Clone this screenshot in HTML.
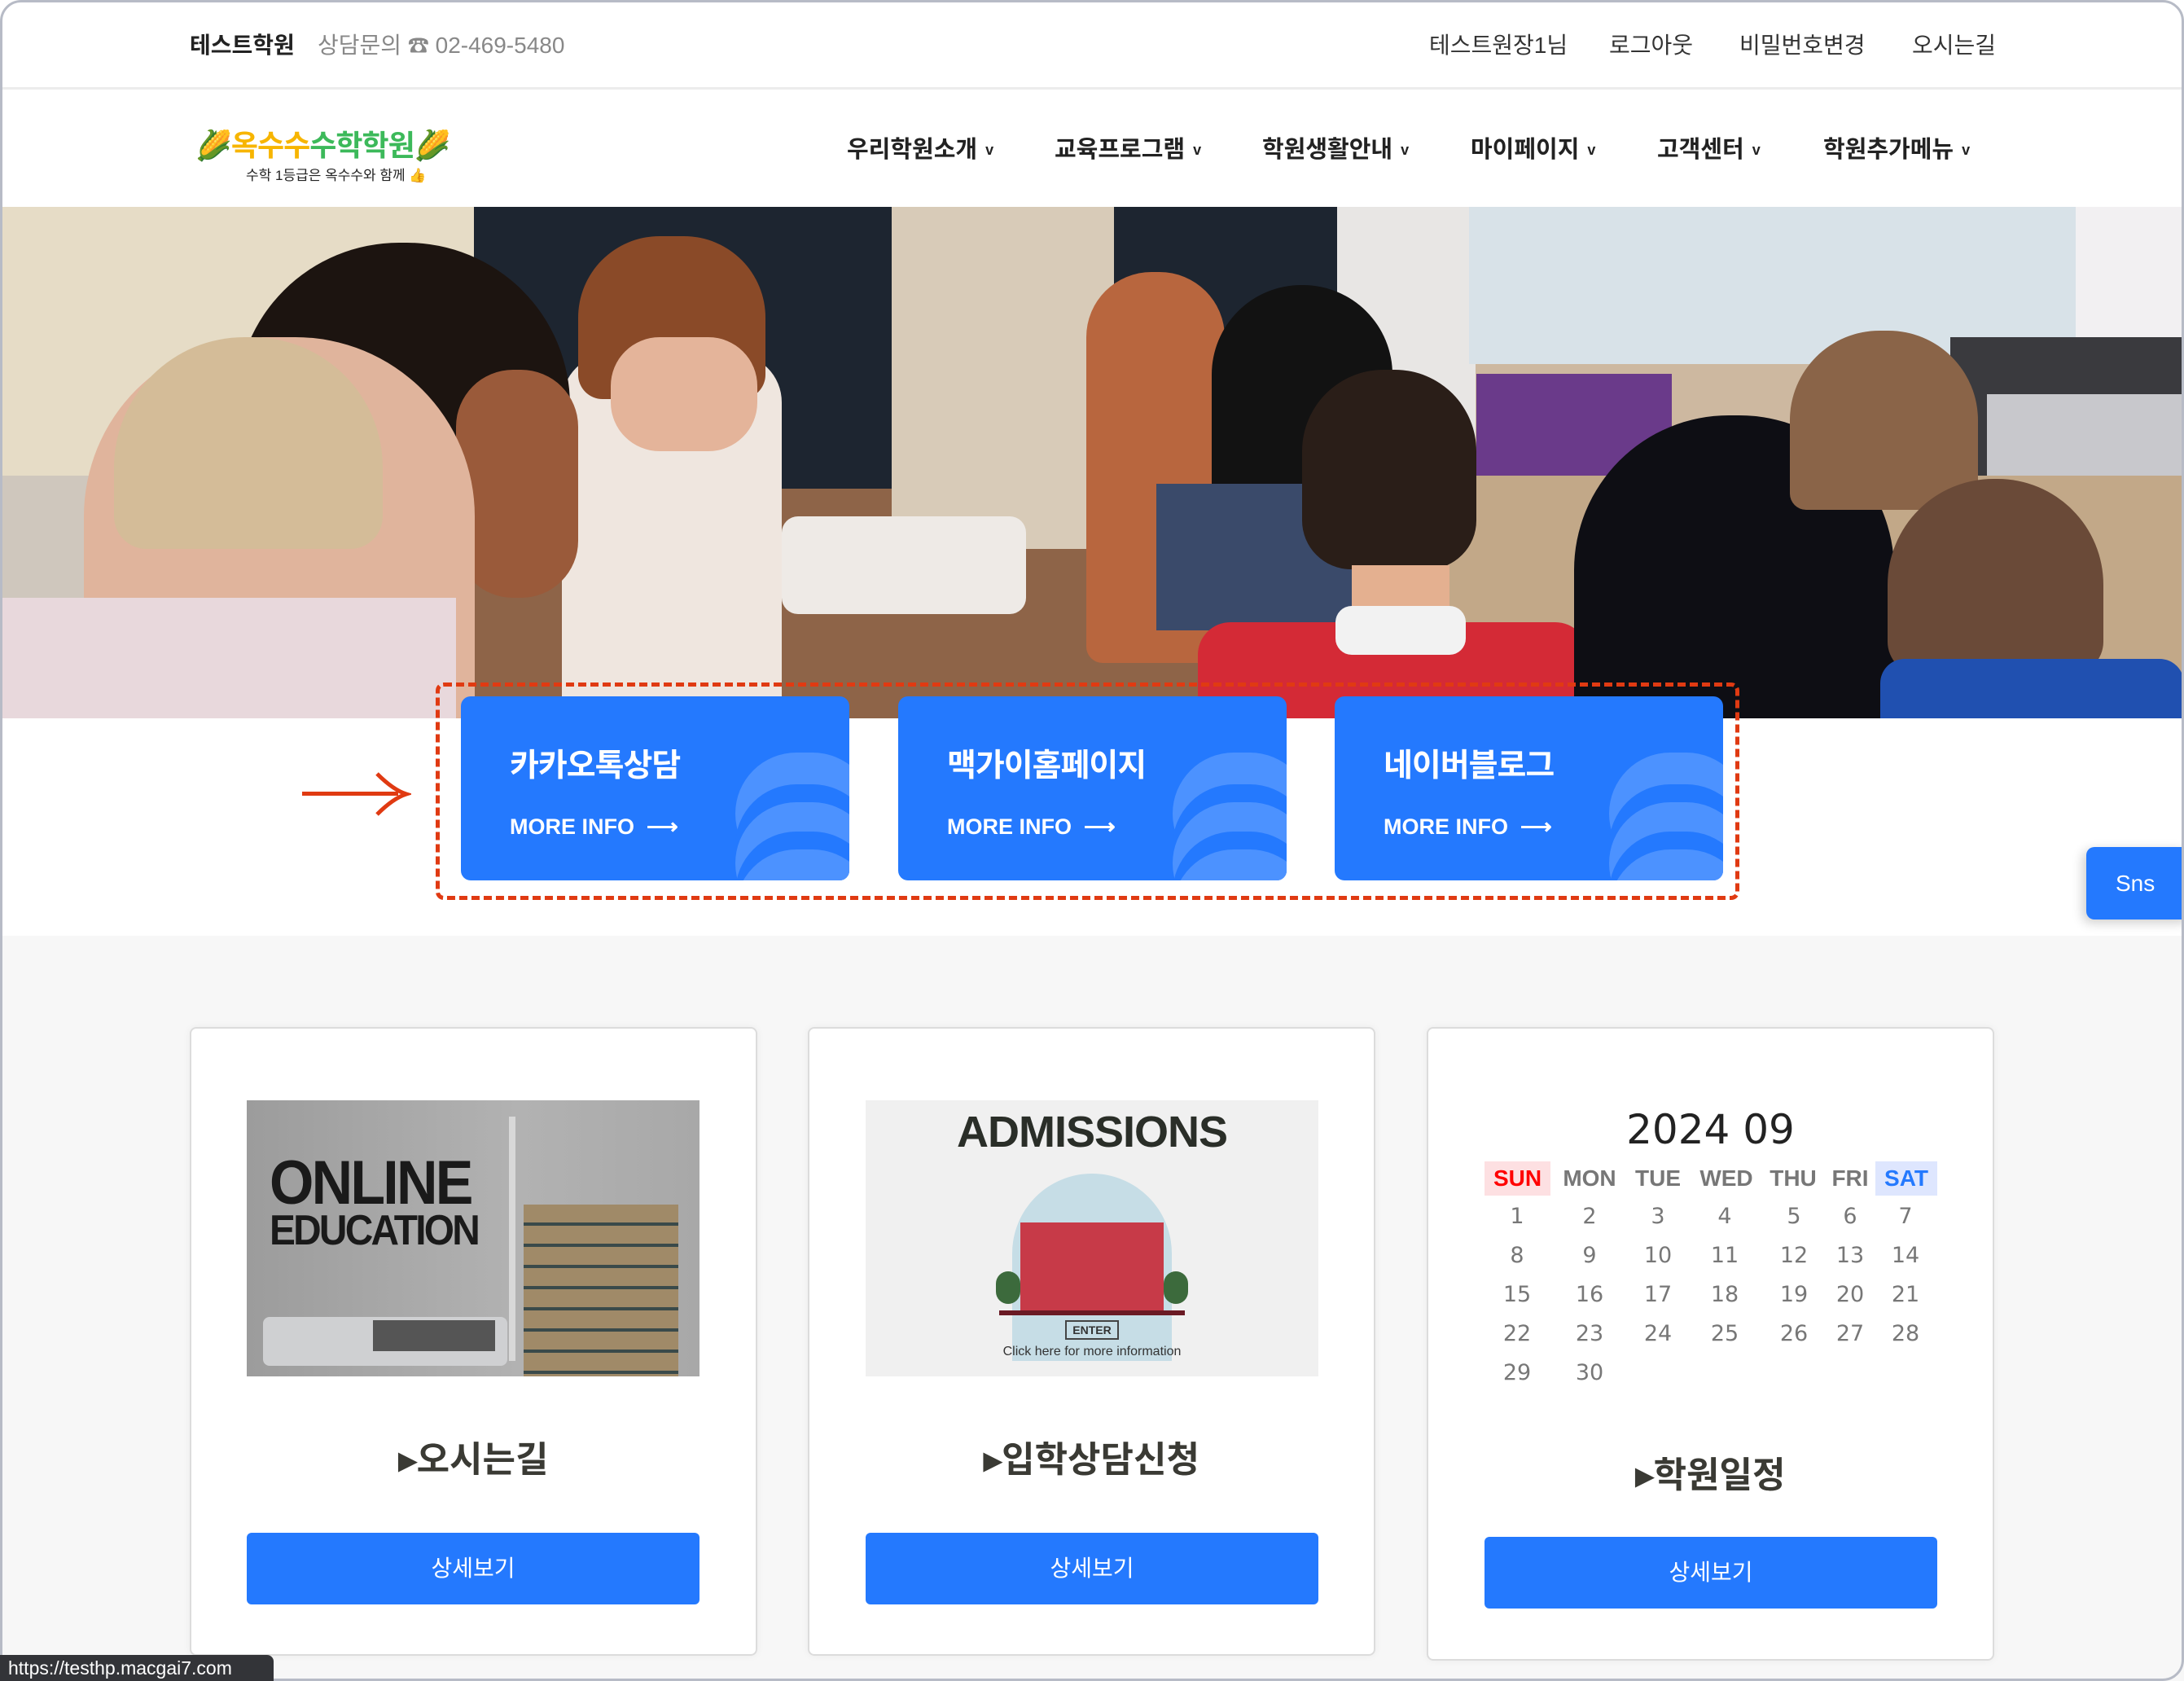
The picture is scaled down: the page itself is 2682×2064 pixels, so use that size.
<!DOCTYPE html>
<html><head><meta charset="utf-8"><style>
*{margin:0;padding:0;box-sizing:border-box}
body{width:2682px;height:2064px;overflow:hidden;background:#fff;font-family:"Liberation Sans","Noto Sans CJK KR",sans-serif;position:relative}
.a{position:absolute}
.frame{position:absolute;left:0;top:0;width:2682px;height:2064px;border:3px solid #b7bbc6;border-radius:26px;pointer-events:none;z-index:50}
.top{font-size:28px;color:#333;top:34px}
.nav{font-size:29px;font-weight:bold;color:#222;top:160px}
.nav span{font-size:18px;margin-left:10px;vertical-align:3px}
.hero div{position:absolute}
.card{background:#2479fe;border-radius:12px;overflow:hidden;top:855px;width:477px;height:226px}
.card .t{position:absolute;left:60px;top:54px;color:#fff;font-size:39px;font-weight:bold;letter-spacing:-1px}
.card .m{position:absolute;left:60px;top:145px;color:#fff;font-size:27px;font-weight:bold}
.coin{position:absolute;left:337px;width:170px;height:150px;border-radius:85px;background:#4c92ff}
.card .c2,.card .c3{box-shadow:0 -22px 0 #2479fe}
.bc{background:#fff;border:2px solid #dcdcdc;border-radius:8px;box-shadow:0 0 10px rgba(0,0,0,.05)}
.btn{background:#2479fe;border-radius:6px;color:#fff;font-size:28px;text-align:center;line-height:88px;width:556px;height:88px}
.ttl{font-size:44px;font-weight:bold;color:#3a3a34;text-align:center}
.cal{font-family:"DejaVu Sans","Liberation Sans",sans-serif;color:#777;font-size:27px;text-align:center;width:90px;margin-left:-45px}
.wd{font-weight:bold;font-size:28px;color:#777;text-align:center;top:1426px;height:42px;line-height:42px}
</style></head><body>
<div class="frame"></div>

<div class="a top" style="left:233px;font-weight:bold;color:#222">테스트학원</div>
<div class="a top" style="left:390px;color:#888">상담문의 <span style="font-size:26px">&#9742;</span> 02-469-5480</div>
<div class="a top" style="left:1755px">테스트원장1님</div>
<div class="a top" style="left:1976px">로그아웃</div>
<div class="a top" style="left:2136px">비밀번호변경</div>
<div class="a top" style="left:2348px">오시는길</div>
<div class="a" style="left:0;top:107px;width:2682px;height:3px;background:#ececec"></div>

<div class="a" style="left:240px;top:150px;font-size:36px;font-weight:bold;letter-spacing:-1px"><span style="color:#6cbd3a">🌽</span><span style="color:#f7b500">옥수수</span><span style="color:#3cb95a">수학학원</span><span style="color:#6cbd3a">🌽</span></div>
<div class="a" style="left:302px;top:201px;font-size:17px;color:#222">수학 1등급은 옥수수와 함께 👍</div>
<div class="a nav" style="left:1040px">우리학원소개<span>v</span></div>
<div class="a nav" style="left:1295px">교육프로그램<span>v</span></div>
<div class="a nav" style="left:1550px">학원생활안내<span>v</span></div>
<div class="a nav" style="left:1806px">마이페이지<span>v</span></div>
<div class="a nav" style="left:2035px">고객센터<span>v</span></div>
<div class="a nav" style="left:2239px">학원추가메뉴<span>v</span></div>

<div class="a hero" style="left:0;top:254px;width:2682px;height:628px;overflow:hidden;background:#cdb8a0">
 <div style="left:0;top:0;width:582px;height:330px;background:#e6dcc6"></div>
 <div style="left:0;top:330px;width:582px;height:300px;background:#cfc7bd"></div>
 <div style="left:582px;top:0;width:1060px;height:346px;background:#1d2530"></div>
 <div style="left:1642px;top:0;width:170px;height:330px;background:#e8e6e4"></div>
 <div style="left:1804px;top:0;width:745px;height:193px;background:#d8e2e8"></div>
 <div style="left:2549px;top:0;width:133px;height:170px;background:#f2f0f2"></div>
 <div style="left:1813px;top:205px;width:240px;height:150px;background:#6a3a8a"></div>
 <div style="left:2395px;top:160px;width:287px;height:195px;background:#3a3a3e"></div>
 <div style="left:2440px;top:230px;width:242px;height:120px;background:#c8c8cc"></div>
 <div style="left:1642px;top:330px;width:1040px;height:300px;background:#c2a888"></div>
 <div style="left:582px;top:346px;width:900px;height:290px;background:#8e6448"></div>
 <div style="left:1095px;top:0;width:273px;height:420px;background:#d8cbb8"></div>
 <div style="left:960px;top:380px;width:300px;height:120px;background:#eeeae6;border-radius:20px"></div>
 <div style="left:690px;top:180px;width:270px;height:450px;background:#efe6df;border-radius:60px 60px 0 0"></div>
 <div style="left:710px;top:36px;width:230px;height:200px;background:#8a4a28;border-radius:100px 100px 30px 30px"></div>
 <div style="left:750px;top:160px;width:180px;height:140px;background:#e4b49a;border-radius:60px"></div>
 <div style="left:290px;top:44px;width:410px;height:400px;background:#1c1410;border-radius:200px 200px 60px 60px"></div>
 <div style="left:560px;top:200px;width:150px;height:280px;background:#9a5a3a;border-radius:70px"></div>
 <div style="left:103px;top:160px;width:480px;height:470px;background:#e0b49c;border-radius:220px 220px 0 0"></div>
 <div style="left:140px;top:160px;width:330px;height:260px;background:#d4bc98;border-radius:160px 160px 40px 40px"></div>
 <div style="left:0;top:480px;width:560px;height:150px;background:#e8d8dc"></div>
 <div style="left:1334px;top:80px;width:170px;height:480px;background:#b8663e;border-radius:80px 80px 20px 20px"></div>
 <div style="left:1488px;top:96px;width:222px;height:270px;background:#121212;border-radius:110px 110px 20px 20px"></div>
 <div style="left:1420px;top:340px;width:330px;height:180px;background:#3a4a6a"></div>
 <div style="left:1599px;top:200px;width:214px;height:245px;background:#2a1e18;border-radius:100px 100px 60px 60px"></div>
 <div style="left:1660px;top:440px;width:120px;height:80px;background:#e4b090"></div>
 <div style="left:1471px;top:510px;width:479px;height:120px;background:#d42a36;border-radius:40px 40px 0 0"></div>
 <div style="left:1640px;top:490px;width:160px;height:60px;background:#f2f2f2;border-radius:20px"></div>
 <div style="left:1933px;top:256px;width:393px;height:380px;background:#0e0e14;border-radius:190px 190px 0 0"></div>
 <div style="left:2198px;top:152px;width:231px;height:220px;background:#8a6448;border-radius:110px 110px 20px 20px"></div>
 <div style="left:2318px;top:334px;width:265px;height:240px;background:#6a4a38;border-radius:130px 130px 40px 40px"></div>
 <div style="left:2309px;top:555px;width:373px;height:80px;background:#2050b0;border-radius:30px 30px 0 0"></div>
</div>

<div class="a" style="left:0;top:882px;width:2682px;height:267px;background:#fff"></div>
<div class="a" style="left:535px;top:838px;width:1601px;height:267px;border:5px dashed #e03a12;border-radius:10px"></div>
<div class="a" style="left:371px;top:972px;width:118px;height:5px;background:#e03a12"></div>
<svg class="a" style="left:455px;top:948px" width="50" height="54" viewBox="0 0 50 54"><path d="M8 2 Q28 22 44 27 Q28 32 8 52" fill="none" stroke="#e03a12" stroke-width="5"/></svg>

<div class="a card" style="left:566px"><div class="coin" style="top:69px"></div><div class="coin c2" style="top:130px"></div><div class="coin c3" style="top:188px"></div><div class="t">카카오톡상담</div><div class="m">MORE INFO &nbsp;⟶</div></div>
<div class="a card" style="left:1103px"><div class="coin" style="top:69px"></div><div class="coin c2" style="top:130px"></div><div class="coin c3" style="top:188px"></div><div class="t">맥가이홈페이지</div><div class="m">MORE INFO &nbsp;⟶</div></div>
<div class="a card" style="left:1639px"><div class="coin" style="top:69px"></div><div class="coin c2" style="top:130px"></div><div class="coin c3" style="top:188px"></div><div class="t">네이버블로그</div><div class="m">MORE INFO &nbsp;⟶</div></div>

<div class="a" style="left:2562px;top:1040px;width:130px;height:89px;background:#2479fe;border-radius:10px;color:#fff;font-size:28px;line-height:89px;padding-left:36px;box-shadow:-4px 4px 14px rgba(0,0,0,.2)">Sns</div>

<div class="a" style="left:0;top:1149px;width:2682px;height:915px;background:#f7f7f7"></div>

<div class="a bc" style="left:233px;top:1261px;width:697px;height:772px"></div>
<div class="a bc" style="left:992px;top:1261px;width:697px;height:772px"></div>
<div class="a bc" style="left:1752px;top:1261px;width:697px;height:778px"></div>

<div class="a" style="left:303px;top:1351px;width:556px;height:339px;background:linear-gradient(90deg,#9c9c9c,#b2b2b2 60%,#a8a8a8);overflow:hidden">
 <div class="a" style="left:28px;top:58px;font-size:76px;font-weight:bold;color:#1a1a1a;letter-spacing:-3px;transform:scaleX(.92);transform-origin:left">ONLINE</div>
 <div class="a" style="left:28px;top:130px;font-size:52px;font-weight:bold;color:#1a1a1a;letter-spacing:-3px;transform:scaleX(.92);transform-origin:left">EDUCATION</div>
 <div class="a" style="left:322px;top:20px;width:8px;height:300px;background:#d8d8d8"></div>
 <div class="a" style="left:20px;top:266px;width:300px;height:60px;background:#cfd0d2;border-radius:8px"></div>
 <div class="a" style="left:155px;top:270px;width:150px;height:38px;background:#555"></div>
 <div class="a" style="left:340px;top:128px;width:190px;height:211px;background:repeating-linear-gradient(180deg,#a08a68 0,#a08a68 22px,#3a4a4a 22px,#3a4a4a 26px)"></div>
</div>
<div class="a" style="left:1063px;top:1351px;width:556px;height:339px;background:#f0f0f0;overflow:hidden">
 <div class="a" style="left:0;width:556px;text-align:center;top:8px;font-size:54px;font-weight:bold;color:#2a2e28;letter-spacing:-1px">ADMISSIONS</div>
 <div class="a" style="left:180px;top:90px;width:196px;height:230px;border-radius:98px 98px 0 0;background:#c6dde6"></div>
 <div class="a" style="left:190px;top:150px;width:176px;height:108px;background:#c73a48"></div>
 <div class="a" style="left:160px;top:210px;width:30px;height:40px;border-radius:15px;background:#3c6a3c"></div>
 <div class="a" style="left:366px;top:210px;width:30px;height:40px;border-radius:15px;background:#3c6a3c"></div>
 <div class="a" style="left:164px;top:258px;width:228px;height:6px;background:#6a1a24"></div>
 <div class="a" style="left:245px;top:270px;width:66px;height:24px;border:2px solid #444;font-size:14px;font-weight:bold;text-align:center;line-height:20px;color:#333">ENTER</div>
 <div class="a" style="left:0;width:556px;text-align:center;top:300px;font-size:16px;color:#333">Click here for more information</div>
</div>

<div class="a ttl" style="left:233px;width:697px;top:1756px">▸오시는길</div>
<div class="a ttl" style="left:992px;width:697px;top:1756px">▸입학상담신청</div>
<div class="a ttl" style="left:1752px;width:697px;top:1775px">▸학원일정</div>

<div class="a btn" style="left:303px;top:1882px">상세보기</div>
<div class="a btn" style="left:1063px;top:1882px">상세보기</div>
<div class="a btn" style="left:1823px;top:1887px">상세보기</div>

<div class="a" style="left:1752px;width:697px;text-align:center;top:1358px;font-size:50px;color:#222;font-family:'DejaVu Sans',sans-serif">2024 09</div>
<div class="a wd" style="left:1823px;width:81px;background:#fde0e2;color:#f00">SUN</div>
<div class="a wd" style="left:1912px;width:80px">MON</div>
<div class="a wd" style="left:2005px;width:62px">TUE</div>
<div class="a wd" style="left:2085px;width:70px">WED</div>
<div class="a wd" style="left:2172px;width:60px">THU</div>
<div class="a wd" style="left:2248px;width:48px">FRI</div>
<div class="a wd" style="left:2303px;width:76px;background:#dee6fe;color:#2479fe">SAT</div>
<div class="a cal" style="left:1863px;top:1478px">1</div><div class="a cal" style="left:1952px;top:1478px">2</div><div class="a cal" style="left:2036px;top:1478px">3</div><div class="a cal" style="left:2118px;top:1478px">4</div><div class="a cal" style="left:2203px;top:1478px">5</div><div class="a cal" style="left:2272px;top:1478px">6</div><div class="a cal" style="left:2340px;top:1478px">7</div>
<div class="a cal" style="left:1863px;top:1526px">8</div><div class="a cal" style="left:1952px;top:1526px">9</div><div class="a cal" style="left:2036px;top:1526px">10</div><div class="a cal" style="left:2118px;top:1526px">11</div><div class="a cal" style="left:2203px;top:1526px">12</div><div class="a cal" style="left:2272px;top:1526px">13</div><div class="a cal" style="left:2340px;top:1526px">14</div>
<div class="a cal" style="left:1863px;top:1574px">15</div><div class="a cal" style="left:1952px;top:1574px">16</div><div class="a cal" style="left:2036px;top:1574px">17</div><div class="a cal" style="left:2118px;top:1574px">18</div><div class="a cal" style="left:2203px;top:1574px">19</div><div class="a cal" style="left:2272px;top:1574px">20</div><div class="a cal" style="left:2340px;top:1574px">21</div>
<div class="a cal" style="left:1863px;top:1622px">22</div><div class="a cal" style="left:1952px;top:1622px">23</div><div class="a cal" style="left:2036px;top:1622px">24</div><div class="a cal" style="left:2118px;top:1622px">25</div><div class="a cal" style="left:2203px;top:1622px">26</div><div class="a cal" style="left:2272px;top:1622px">27</div><div class="a cal" style="left:2340px;top:1622px">28</div>
<div class="a cal" style="left:1863px;top:1670px">29</div><div class="a cal" style="left:1952px;top:1670px">30</div>

<div class="a" style="left:0;top:2032px;width:336px;height:32px;background:#333438;border-radius:0 8px 0 0;color:#fff;font-size:23px;line-height:32px;padding-left:10px;z-index:60">https://testhp.macgai7.com</div>
</body></html>
